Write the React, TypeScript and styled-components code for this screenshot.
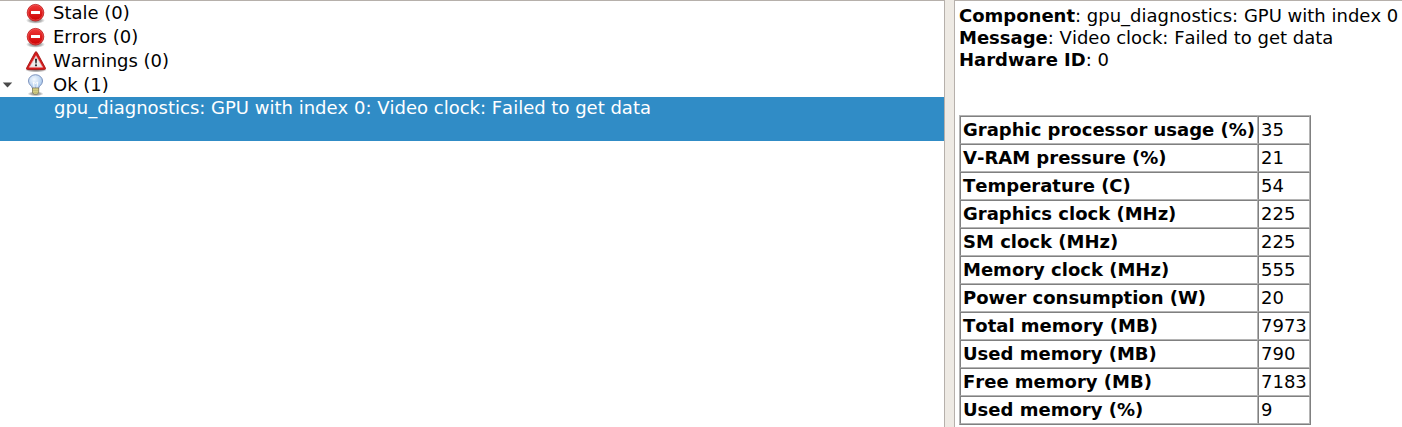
import React from 'react';
import styled, { createGlobalStyle } from 'styled-components';

const GlobalStyle = createGlobalStyle`
  body { margin: 0; background: #eeeae4; overflow: hidden; }
  * { box-sizing: border-box; }
`;

const Window = styled.div`
  display: flex;
  gap: 9px;
  width: 1402px;
  height: 427px;
  overflow: hidden;
  color: #000;
  font: 18px/22px "DejaVu Sans", sans-serif;
  font-kerning: none;
  white-space: nowrap;
`;

const TreePane = styled.section`
  width: 945px;
  flex: none;
  background: #fff;
  border-top: 1px solid #b6b0ab;
  border-right: 1px solid #b6b0ab;
`;

const TreeRow = styled.div`
  display: flex;
  align-items: center;
  height: 24px;
`;

const Expander = styled.span`
  display: flex;
  flex: none;
  width: 24px;
  padding-left: 2px;
`;

const IconSlot = styled.span`
  display: flex;
  flex: none;
  width: 29px;
`;

const SelectedItem = styled.div`
  height: 44px;
  padding-left: 54px;
  color: #fff;
  background: #308cc6;
`;

const DetailPane = styled.section`
  flex: 1;
  min-width: 0;
  padding: 4px 0 0 4px;
  background: #fff;
  border-top: 1px solid #b6b0ab;
  border-left: 1px solid #b6b0ab;
`;

const Line = styled.div`
  height: 22px;
`;

const Table = styled.div`
  width: 352px;
  margin-top: 44px;
  border: 1px solid;
  border-color: #b4b4b4 #808080 #808080 #b4b4b4;
`;

const Row = styled.div`
  display: grid;
  grid-template-columns: 298px 52px;
  height: 28px;
`;

const Cell = styled.div<{ $bold?: boolean }>`
  padding: 2px 0 0 2px;
  border: 1px solid;
  border-color: #808080 #b4b4b4 #b4b4b4 #808080;
  font-weight: ${p => (p.$bold ? 700 : 400)};
`;

const ErrorIcon = () => (
  <svg width="24" height="24" viewBox="0 0 24 24">
    <defs>
      <linearGradient id="red" x1="0" y1="0" x2="0" y2="1">
        <stop offset="0" stopColor="#f03a3a" />
        <stop offset="1" stopColor="#cc0000" />
      </linearGradient>
      <radialGradient id="shade">
        <stop offset="0" stopColor="#000" stopOpacity=".5" />
        <stop offset=".6" stopColor="#000" stopOpacity=".3" />
        <stop offset="1" stopColor="#000" stopOpacity="0" />
      </radialGradient>
    </defs>
    <ellipse cx="11.5" cy="19.4" rx="9.5" ry="3.4" fill="url(#shade)" />
    <circle cx="11.5" cy="11.7" r="8.3" fill="url(#red)" stroke="#b81414" strokeWidth=".8" />
    <circle cx="11.5" cy="11.7" r="7.5" fill="none" stroke="#ee5a5a" strokeWidth=".7" />
    <rect x="7" y="10" width="9" height="3" rx=".3" fill="#fff" />
  </svg>
);

const WarningIcon = () => (
  <svg width="24" height="24" viewBox="0 0 24 24">
    <ellipse cx="12" cy="21" rx="11" ry="2.4" fill="url(#shade)" />
    <path d="M11 3.4q1-1.5 2 0l8.3 15.4q.7 1.8-1 1.8H3.7q-1.8 0-1-1.8z" fill="#d41a1a" stroke="#a31515" strokeWidth=".9" />
    <path d="M12 6.7L18.7 18.3H5.3z" fill="#ececec" stroke="#f4a0a0" strokeWidth=".7" />
    <path d="M11 9.8h2l-.4 4.6h-1.2z" fill="#222" />
    <circle cx="12" cy="16.3" r="1.1" fill="#222" />
  </svg>
);

const BulbIcon = () => (
  <svg width="24" height="24" viewBox="0 0 24 24">
    <defs>
      <radialGradient id="glass" cx=".4" cy=".35" r=".65">
        <stop offset="0" stopColor="#f4f9ff" />
        <stop offset="1" stopColor="#a9c8ec" />
      </radialGradient>
    </defs>
    <ellipse cx="11.6" cy="20.8" rx="8" ry="2.4" fill="url(#shade)" />
    <path d="M8.4 15.3C8.4 13 4.5 12 4.5 8a7 6.3 0 0 1 14 0c0 4-3.9 5-3.9 7.3z" fill="url(#glass)" stroke="#7088b5" strokeWidth=".9" />
    <path d="M10.2 15l-.9-6 2.2 1.5L13.700 9l-.8 6" fill="none" stroke="#fff" strokeWidth=".9" />
    <path d="M8.5 15h6.200v4.800l-1.600 1.400h-3l-1.600-1.400z" fill="#e2db8c" stroke="#77745a" strokeWidth=".8" />
    <path d="M8.700 17.200h5.800M8.700 19.200h5.800" stroke="#96925f" strokeWidth=".6" />
  </svg>
);

const Arrow = () => (
  <svg width="11" height="6" viewBox="0 0 11 6">
    <path d="M.8.5h9.400L5.500 5.500z" fill="#4a4a4a" />
  </svg>
);

const groups = [
  { label: 'Stale (0)', icon: <ErrorIcon />, open: false },
  { label: 'Errors (0)', icon: <ErrorIcon />, open: false },
  { label: 'Warnings (0)', icon: <WarningIcon />, open: false },
  { label: 'Ok (1)', icon: <BulbIcon />, open: true },
];

const values = [
  ['Graphic processor usage (%)', '35'],
  ['V-RAM pressure (%)', '21'],
  ['Temperature (C)', '54'],
  ['Graphics clock (MHz)', '225'],
  ['SM clock (MHz)', '225'],
  ['Memory clock (MHz)', '555'],
  ['Power consumption (W)', '20'],
  ['Total memory (MB)', '7973'],
  ['Used memory (MB)', '790'],
  ['Free memory (MB)', '7183'],
  ['Used memory (%)', '9'],
];

export default function App() {
  return (
    <Window>
      <GlobalStyle />
      <TreePane>
        {groups.map(g => (
          <TreeRow key={g.label}>
            <Expander>{g.open && <Arrow />}</Expander>
            <IconSlot>{g.icon}</IconSlot>
            {g.label}
          </TreeRow>
        ))}
        <SelectedItem>gpu_diagnostics: GPU with index 0: Video clock: Failed to get data</SelectedItem>
      </TreePane>
      <DetailPane>
        <Line><b>Component</b>: gpu_diagnostics: GPU with index 0</Line>
        <Line><b>Message</b>: Video clock: Failed to get data</Line>
        <Line><b>Hardware ID</b>: 0</Line>
        <Table>
          {values.map(([name, value]) => (
            <Row key={name}>
              <Cell $bold>{name}</Cell>
              <Cell>{value}</Cell>
            </Row>
          ))}
        </Table>
      </DetailPane>
    </Window>
  );
}
